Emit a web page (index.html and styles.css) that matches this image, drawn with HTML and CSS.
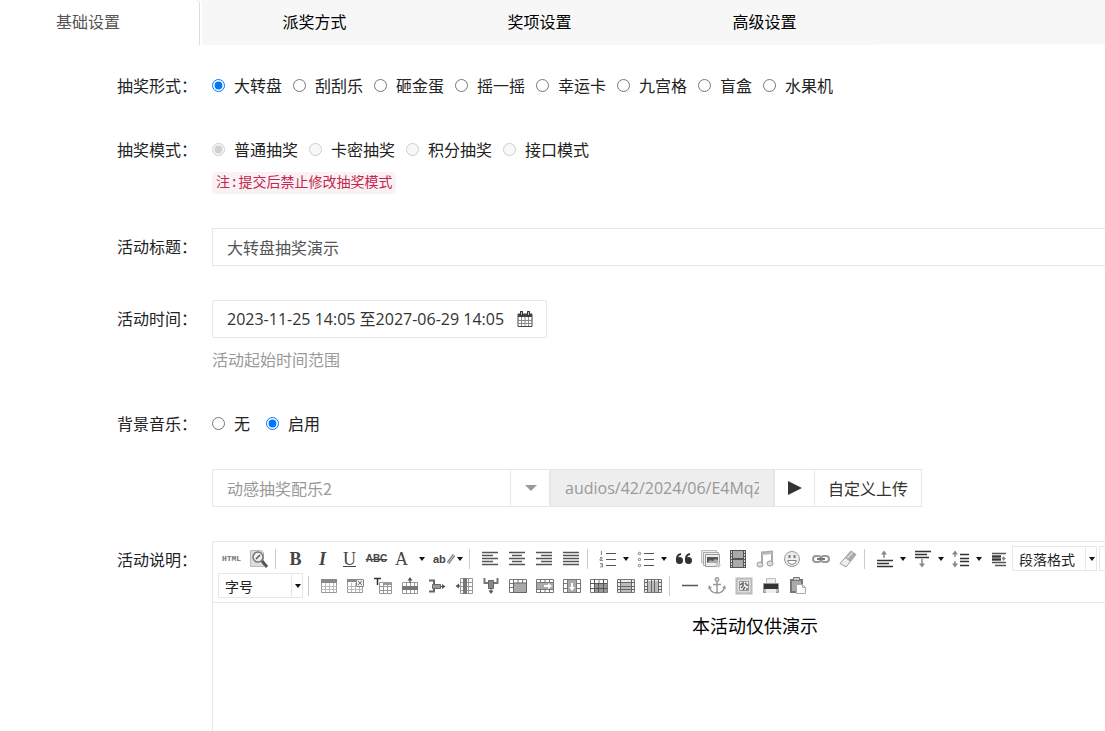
FILE: index.html
```html
<!DOCTYPE html>
<html lang="zh-CN">
<head>
  <meta charset="UTF-8">
  <title>活动设置</title>
  <link rel="stylesheet" href="styles.css">
</head>
<body>
<div class="page">
  <nav class="tabs">
    <a href="#base" class="tab active">基础设置</a>
    <a href="#send" class="tab">派奖方式</a>
    <a href="#prize" class="tab">奖项设置</a>
    <a href="#more" class="tab">高级设置</a>
  </nav>

  <form class="form">
    <div class="row">
      <div class="label" id="l-type">抽奖形式：</div>
      <div class="control">
        <div class="radios" role="radiogroup" aria-labelledby="l-type">
          <label><input type="radio" name="type" checked>大转盘</label>
          <label><input type="radio" name="type">刮刮乐</label>
          <label><input type="radio" name="type">砸金蛋</label>
          <label><input type="radio" name="type">摇一摇</label>
          <label><input type="radio" name="type">幸运卡</label>
          <label><input type="radio" name="type">九宫格</label>
          <label><input type="radio" name="type">盲盒</label>
          <label><input type="radio" name="type">水果机</label>
        </div>
      </div>
    </div>

    <div class="row">
      <div class="label" id="l-mode">抽奖模式：</div>
      <div class="control">
        <div class="radios" role="radiogroup" aria-labelledby="l-mode">
          <label><input type="radio" name="mode" checked disabled>普通抽奖</label>
          <label><input type="radio" name="mode" disabled>卡密抽奖</label>
          <label><input type="radio" name="mode" disabled>积分抽奖</label>
          <label><input type="radio" name="mode" disabled>接口模式</label>
        </div>
        <code class="note">注:提交后禁止修改抽奖模式</code>
      </div>
    </div>

    <div class="row">
      <label class="label tall" for="title">活动标题：</label>
      <div class="control">
        <input class="text" type="text" id="title" value="大转盘抽奖演示">
      </div>
    </div>

    <div class="row">
      <label class="label tall" for="time">活动时间：</label>
      <div class="control">
        <button type="button" class="date" id="time">
          <span>2023-11-25 14:05 至2027-06-29 14:05</span>
          <svg width="16" height="16" viewBox="0 0 16 16"><path d="M1 3h14v12.500H1z" fill="#fff" stroke="#444"/><path d="M1 3h14v3H1z" fill="#444"/><path d="M1 9.500h14M1 12.500h14M4.500 6v9M8 6v9M11.500 6v9" stroke="#888" fill="none"/><path d="M4.500 1v3M11.500 1v3" stroke="#333" stroke-width="3" stroke-linecap="round"/><path d="M4.500 1v3M11.500 1v3" stroke="#bbb"/></svg>
        </button>
        <p class="help">活动起始时间范围</p>
      </div>
    </div>

    <div class="row">
      <div class="label" id="l-music">背景音乐：</div>
      <div class="control">
        <div class="radios wide" role="radiogroup" aria-labelledby="l-music">
          <label><input type="radio" name="music">无</label>
          <label><input type="radio" name="music" checked>启用</label>
        </div>
        <div class="group">
          <div class="select">
            <select aria-label="音乐"><option>动感抽奖配乐2</option></select>
            <span class="caret"></span>
          </div>
          <input class="path" type="text" aria-label="音乐地址" value="audios/42/2024/06/E4MqZ8.mp3" readonly>
          <button type="button" class="play" aria-label="播放"><svg width="14" height="14" viewBox="0 0 14 14"><path d="M0 0l14 7-14 7z" fill="#333"/></svg></button>
          <button type="button" class="upload">自定义上传</button>
        </div>
      </div>
    </div>

    <div class="row">
      <div class="label tall" id="l-desc">活动说明：</div>
      <div class="control">
        <div class="editor">
          <div class="toolbar">
            <div class="line">
              <button type="button" class="t-html">HTML</button>
              <button type="button" aria-label="预览"><svg width="20" height="20" viewBox="0 0 20 20"><path d="M1.500 1.500h11l2 2v14h-13z" fill="#ddd" stroke="#bbb"/><circle cx="9" cy="8" r="5" fill="#eee" stroke="#777" stroke-width="1.500"/><path d="M7 10l4-4" stroke="#555" stroke-width="1.500"/><path d="M13 12l5 6" stroke="#555" stroke-width="3"/></svg></button>
              <i class="sep"></i>
              <button type="button" class="serif bold">B</button>
              <button type="button" class="serif bold italic">I</button>
              <button type="button" class="serif under">U</button>
              <button type="button" class="t-strike">ABC</button>
              <button type="button" class="serif drop">A</button>
              <button type="button" class="drop t-mark" aria-label="背景色">ab<svg width="8" height="12" viewBox="0 0 8 12"><path d="M1 10l6-8" stroke="#777" stroke-width="3"/><path d="M1 10l6-8" stroke="#ddd"/></svg></button>
              <i class="sep"></i>
              <button type="button" aria-label="左对齐"><svg width="16" height="16" viewBox="0 0 16 16"><path d="M0 1.500h16M0 4.500h11M0 7.500h16M0 10.500h11M0 13.500h16" stroke="#555" stroke-width="1.400"/></svg></button>
              <button type="button" aria-label="居中"><svg width="16" height="16" viewBox="0 0 16 16"><path d="M0 1.500h16M3 4.500h10M0 7.500h16M3 10.500h10M0 13.500h16" stroke="#555" stroke-width="1.400"/></svg></button>
              <button type="button" aria-label="右对齐"><svg width="16" height="16" viewBox="0 0 16 16"><path d="M0 1.500h16M5 4.500h11M0 7.500h16M5 10.500h11M0 13.500h16" stroke="#555" stroke-width="1.400"/></svg></button>
              <button type="button" aria-label="两端对齐"><svg width="16" height="16" viewBox="0 0 16 16"><path d="M0 1.500h16M0 4.500h16M0 7.500h16M0 10.500h16M0 13.500h16" stroke="#555" stroke-width="1.400"/></svg></button>
              <i class="sep"></i>
              <button type="button" class="drop" aria-label="编号"><svg width="18" height="18" viewBox="0 0 18 18"><path d="M7 3.500h10M7 9.500h10M7 15.500h10" stroke="#555"/><path d="M2.500 1v4M1 7.500h2v1.500h-2v1.500h3M1 13.500h2.500v3.500h-2.500M1.500 15h2" stroke="#888" fill="none"/></svg></button>
              <button type="button" class="drop" aria-label="项目符号"><svg width="18" height="18" viewBox="0 0 18 18"><path d="M7 3.500h10M7 9.500h10M7 15.500h10" stroke="#555"/><g fill="none" stroke="#777"><circle cx="2.500" cy="3.500" r="1.200"/><circle cx="2.500" cy="9.500" r="1.200"/><circle cx="2.500" cy="15.500" r="1.200"/></g></svg></button>
              <button type="button" aria-label="引用"><svg width="18" height="12" viewBox="0 0 18 12"><g fill="#333"><circle cx="4.500" cy="7.500" r="3.500"/><circle cx="13.500" cy="7.500" r="3.500"/></g><path d="M2 8q-1-6 4-7M11 8q-1-6 4-7" stroke="#333" stroke-width="1.800" fill="none"/></svg></button>
              <button type="button" aria-label="图片"><svg width="20" height="20" viewBox="0 0 20 20"><path d="M.5 1.500h15v12H.5z" fill="#eee" stroke="#bbb"/><path d="M2.500 3.500h15v13h-15z" fill="#eee" stroke="#aaa"/><path d="M4.500 5.500h14v12h-14z" fill="#eee" stroke="#999"/><path d="M6 8h11v6H6z" fill="#555"/><path d="M6 14l3-3 3 1 2-2 3 1v3z" fill="#aaa"/><circle cx="17" cy="16" r="2.500" fill="#ccc"/></svg></button>
              <button type="button" aria-label="视频"><svg width="18" height="18" viewBox="0 0 18 18"><path d="M1 0h16v18H1z" fill="#555"/><path d="M4 1h10v7H4zM4 10h10v7H4z" fill="#aaa"/><path d="M2.500 1v16M15.500 1v16" stroke="#ddd" stroke-dasharray="2 1"/></svg></button>
              <button type="button" aria-label="音频"><svg width="18" height="18" viewBox="0 0 18 18"><path d="M6 14V2.500l10-1V13" stroke="#aaa" stroke-width="2" fill="none"/><path d="M6 4l10-1" stroke="#bbb" stroke-width="2"/><g fill="#ddd" stroke="#999"><ellipse cx="4" cy="14.500" rx="3" ry="2.500"/><ellipse cx="14" cy="13.500" rx="3" ry="2.500"/></g></svg></button>
              <button type="button" aria-label="表情"><svg width="18" height="18" viewBox="0 0 18 18"><circle cx="9" cy="9" r="7.500" fill="#eee" stroke="#999"/><path d="M6.500 5v3M11.500 5v3" stroke="#777" stroke-width="2"/><path d="M4.500 10.500h9q-1 4-4.500 4t-4.500-4z" fill="#fff" stroke="#888"/></svg></button>
              <button type="button" class="push" aria-label="链接"><svg width="18" height="10" viewBox="0 0 18 10"><g fill="none" stroke="#999" stroke-width="2"><rect x="1" y="2" width="8" height="6" rx="3"/><rect x="9" y="2" width="8" height="6" rx="3"/></g><path d="M5 5h8" stroke="#777" stroke-width="2"/></svg></button>
              <button type="button" aria-label="清除格式"><svg width="18" height="18" viewBox="0 0 18 18"><path d="M1 13.500L12 1l5 3.500L7 17z" fill="#eee" stroke="#999"/><path d="M6 8l5.500 4L17 4.500 12 1z" fill="#aaa"/><path d="M8.500 8l5-5.500" stroke="#ddd" stroke-width="1.500"/></svg></button>
              <i class="sep"></i>
              <button type="button" class="drop" aria-label="段前距"><svg width="18" height="18" viewBox="0 0 18 18"><path d="M1 10.500h16M1 13.500h12M1 16.500h16" stroke="#333" stroke-width="1.500"/><path d="M8 8V2" stroke="#888" stroke-width="1.500"/><path d="M5 4.500l3-4 3 4z" fill="#888"/></svg></button>
              <button type="button" class="drop" aria-label="段后距"><svg width="18" height="18" viewBox="0 0 18 18"><path d="M1 1.500h16M1 4.500h12M1 7.500h14" stroke="#333" stroke-width="1.500"/><path d="M8 9v6" stroke="#888" stroke-width="1.500"/><path d="M5 13.500l3 4 3-4z" fill="#888"/></svg></button>
              <button type="button" class="drop" aria-label="行距"><svg width="18" height="18" viewBox="0 0 18 18"><path d="M8 4.500h9M8 8.500h9M8 11.500h9M8 15.500h9" stroke="#333" stroke-width="1.300"/><path d="M3 2v14" stroke="#888" stroke-width="1.500" stroke-dasharray="5 4"/><path d="M0 4.500l3-4 3 4zM0 13.500l3 4 3-4z" fill="#888"/></svg></button>
              <button type="button" aria-label="缩进"><svg width="16" height="16" viewBox="0 0 16 16"><path d="M1 2.500h14M1 11.500h14M4 14.500h11" stroke="#555" stroke-width="1.500"/><path d="M1 4h9v6H1z" fill="#777"/><path d="M1 5.500h9M1 8.500h9" stroke="#333"/><path d="M11 7.500h2" stroke="#888" stroke-width="2"/><path d="M12 5l3 2.500-3 2.500z" fill="#888"/></svg></button>
              <div class="mini"><select aria-label="段落格式"><option>段落格式</option></select><span></span></div>
              <div class="mini"><select aria-label="字体"><option>字体</option></select><span></span></div>
            </div>
            <div class="line">
              <div class="mini"><select aria-label="字号"><option>字号</option></select><span></span></div>
              <i class="sep"></i>
              <button type="button" aria-label="插入表格"><svg width="16" height="16" viewBox="0 0 16 16"><path d="M.5 1.500h15v13H.5z" fill="#fff" stroke="#999"/><path d="M0 1h16v4H0z" fill="#888"/><path d="M0 8.500h16M0 11.500h16M4.500 5v9M8.500 5v9M12.500 5v9" stroke="#bbb"/></svg></button>
              <button type="button" aria-label="删除表格"><svg width="18" height="16" viewBox="0 0 18 16"><path d="M.5 1.500h15v13H.5z" fill="#fff" stroke="#999"/><path d="M0 1h10v3H0z" fill="#888"/><path d="M0 8.500h16M0 11.500h16M4.500 5v9M8.500 5v9M12.500 5v9" stroke="#bbb"/><path d="M9.500 1.500h7v7h-7z" fill="#eee" stroke="#888"/><path d="M11 3l4 4M15 3l-4 4" stroke="#777"/></svg></button>
              <button type="button" aria-label="表格标题"><svg width="18" height="18" viewBox="0 0 18 18"><path d="M0 1.500h7M3.500 1v7" stroke="#333" stroke-width="1.500"/><path d="M5.500 5.500h12v11h-12zM5 9.500h12M5 13.500h12M9.500 6v10M13.500 6v10" fill="none" stroke="#999"/><path d="M9 5h8v3H9z" fill="#999"/></svg></button>
              <button type="button" aria-label="上方插入行"><svg width="18" height="18" viewBox="0 0 18 18"><path d="M1.500 5.500h15v11h-15zM5.500 5v11M9.500 5v11M13.500 5v11" fill="none" stroke="#999"/><path d="M1 9h16v4H1z" fill="#777"/><path d="M9 6V2" stroke="#333"/><path d="M6.500 3.500L9 0l2.500 3.500z" fill="#555"/></svg></button>
              <button type="button" aria-label="合并右侧"><svg width="18" height="16" viewBox="0 0 18 16"><path d="M1 2.500h5v11H1" fill="none" stroke="#666" stroke-width="2"/><path d="M4.500 6.500h8v4h-8z" fill="#999" stroke="#666"/><path d="M13 8.500h3" stroke="#555"/><path d="M14 6l3.500 2.500L14 11z" fill="#555"/></svg></button>
              <button type="button" aria-label="左侧插入列"><svg width="18" height="18" viewBox="0 0 18 18"><path d="M5.500 1.500h12v15h-12zM5 5.500h12M5 9.500h12M5 13.500h12M13.500 1v15" fill="none" stroke="#999"/><path d="M8 1h4v16H8z" fill="#777"/><path d="M5 9H2" stroke="#333"/><path d="M4 6.500L.5 9 4 11.500z" fill="#555"/></svg></button>
              <button type="button" aria-label="向下合并"><svg width="16" height="18" viewBox="0 0 16 18"><path d="M1.500 1v5H6M14.500 1v5H10" fill="none" stroke="#777" stroke-width="2"/><path d="M5.500 3.500h5v8h-5z" fill="#888" stroke="#666"/><path d="M8 11v3" stroke="#555"/><path d="M5.500 13.500h5L8 17z" fill="#555"/></svg></button>
              <button type="button" aria-label="合并单元格"><svg width="18" height="16" viewBox="0 0 18 16"><path d="M.5 1.500h17v13H.5zM0 5.500h17M0 9.500h4M4.500 1v13M9 1v4M13.500 1v4" fill="#fff" stroke="#777"/><path d="M4.500 5h13v9.500h-13z" fill="#aaa" stroke="#666"/></svg></button>
              <button type="button" aria-label="右合并"><svg width="18" height="16" viewBox="0 0 18 16"><path d="M.5 1.500h17v13H.5zM4.500 1v13M9 1v13M13.500 1v13" fill="#fff" stroke="#777"/><path d="M.5 4.500h17v7H.5z" fill="#aaa" stroke="#777"/><path d="M8 8h5" stroke="#fff" stroke-width="2"/><path d="M12 5l4 3-4 3z" fill="#fff"/></svg></button>
              <button type="button" aria-label="下合并"><svg width="18" height="16" viewBox="0 0 18 16"><path d="M.5 1.500h17v13H.5zM0 5.500h17M0 10.500h17" fill="#fff" stroke="#777"/><path d="M4.500 1.500h9v13h-9z" fill="#aaa" stroke="#777"/><path d="M9 5v5" stroke="#fff" stroke-width="2"/><path d="M6 9l3 4 3-4z" fill="#fff"/></svg></button>
              <button type="button" aria-label="拆分单元格"><svg width="18" height="16" viewBox="0 0 18 16"><path d="M.5 1.500h17v13H.5zM9 1v4" fill="#fff" stroke="#777"/><path d="M4 5h13v9H4z" fill="#999"/><path d="M0 5.500h17M0 10.500h17M4.500 1v13M8.500 5v9M13.500 1v13" stroke="#555"/></svg></button>
              <button type="button" aria-label="拆分行"><svg width="18" height="16" viewBox="0 0 18 16"><path d="M.5 1.500h17v13H.5z" fill="#eee" stroke="#777"/><path d="M4 4h10v10H4z" fill="#bbb"/><path d="M0 4.500h18M0 8.500h18M0 11.500h18M3.500 1v13M14.500 1v13" stroke="#666"/></svg></button>
              <button type="button" aria-label="拆分列"><svg width="18" height="16" viewBox="0 0 18 16"><path d="M.5 1.500h17v13H.5z" fill="#eee" stroke="#777"/><path d="M4 3h10v11H4z" fill="#bbb"/><path d="M0 4.500h4M0 8.500h4M0 11.500h4M14 4.500h4M14 8.500h4M14 11.500h4M3.500 1v13M7.500 1v13M10.500 1v13M14.500 1v13" stroke="#666"/></svg></button>
              <i class="sep"></i>
              <button type="button" aria-label="分隔线"><svg width="16" height="16" viewBox="0 0 16 16"><path d="M0 7.500h16" stroke="#555" stroke-width="1.500"/></svg></button>
              <button type="button" aria-label="锚点"><svg width="18" height="18" viewBox="0 0 18 18"><g fill="none" stroke="#999" stroke-width="1.500"><circle cx="9" cy="2.500" r="1.700"/><path d="M9 4v12M5 7.500h8M1.500 10q1 6 7.500 6t7.500-6"/></g><path d="M0 12l1-4 3 3zM18 12l-1-4-3 3z" fill="#999"/></svg></button>
              <button type="button" aria-label="地图"><svg width="18" height="18" viewBox="0 0 18 18"><path d="M1.500 1.500h15v15h-15z" fill="#ddd" stroke="#bbb" stroke-width="2"/><path d="M4.500 4.500h9v9h-9z" fill="#eee" stroke="#999"/><path d="M5 8l3-2v3l-2 2M10 6l3 3M10 10l-2 3M12 11v2" stroke="#666" stroke-width="1.500" fill="none"/></svg></button>
              <button type="button" aria-label="打印"><svg width="18" height="18" viewBox="0 0 18 18"><path d="M4.500 1.500h9v5h-9z" fill="#eee" stroke="#bbb"/><path d="M1.500 6.500h15v9h-15z" fill="#bbb" stroke="#999"/><path d="M2 7h14v5H2z" fill="#333"/><path d="M4 12h10v4H4z" fill="#eee"/></svg></button>
              <button type="button" aria-label="粘贴"><svg width="18" height="18" viewBox="0 0 18 18"><path d="M1 2h13v14H1z" fill="#777"/><path d="M3 4h9v10H3z" fill="#aaa"/><path d="M4.500 .5h6v3h-6z" fill="#ccc" stroke="#777"/><path d="M7.500 7.500h6l3 3v6h-9z" fill="#fff" stroke="#aaa"/><path d="M13.500 7.500v3h3" fill="none" stroke="#aaa"/></svg></button>
            </div>
          </div>
          <div class="content" contenteditable="true" role="textbox" aria-labelledby="l-desc">本活动仅供演示</div>
        </div>
      </div>
    </div>
  </form>
</div>
</body>
</html>
```
FILE: styles.css
```css
* {
  box-sizing: border-box;
}
body {
  margin: 0;
  background: #fff;
  color: #222;
  font: 16px/24px "Noto Sans CJK SC", sans-serif;
}
.page {
  height: 100vh;
  overflow: hidden;
}
button, input, select {
  margin: 0;
  font: inherit;
  color: inherit;
  border: 1px solid #e7e7e7;
  border-radius: 0;
  background: #fff;
}
button {
  padding: 0;
  cursor: pointer;
}

/* tabs */
.tabs {
  display: flex;
  align-items: flex-start;
  height: 44px;
  background: #f7f7f7;
}
.tab {
  width: 225px;
  height: 45px;
  line-height: 43px;
  text-align: center;
  color: #000;
  text-decoration: none;
  background: #f7f7f7;
}
.tab.active {
  width: 200px;
  margin-right: 2px;
  padding-right: 23px;
  color: #555;
  background: #fff;
  border-right: 1px solid #ddd;
  border-top-right-radius: 4px;
  box-shadow: 2px 0 #fff;
}

/* form */
.form {
  min-width: 1298px;
  padding-top: 27px;
}
.row {
  display: flex;
  gap: 15px;
  margin-bottom: 34px;
}
.label {
  width: 197px;
  line-height: 28px;
  text-align: right;
}
.label.tall {
  line-height: 36px;
}
.control {
  flex: 1;
}
.radios {
  display: flex;
  gap: 11px;
  height: 30px;
  padding-bottom: 2px;
}
.radios.wide {
  gap: 16px;
}
.radios label {
  display: flex;
  align-items: center;
  gap: 9px;
}
.radios input {
  width: 13px;
  height: 13px;
}
.note {
  display: block;
  width: fit-content;
  margin-top: 7px;
  padding: 0 4px;
  font: 14px/22px "Liberation Mono", "Noto Sans CJK SC", monospace;
  color: #c7254e;
  background: #f9f2f4;
  border-radius: 4px;
}
.text {
  display: block;
  width: 100%;
  height: 38px;
  padding: 0 14px;
  color: #555;
}
.date {
  display: flex;
  align-items: center;
  justify-content: space-between;
  min-width: 335px;
  height: 38px;
  padding: 0 13px 0 14px;
  color: #333;
  font-family: "Open Sans", "Noto Sans CJK SC", sans-serif;
  border-radius: 2px;
}
.help {
  margin: 9px 0 0;
  height: 28px;
  color: #999;
}

/* background music */
.group {
  display: flex;
  height: 38px;
  margin-top: 30px;
}
.select {
  position: relative;
  width: 338px;
}
.select select {
  appearance: none;
  width: 100%;
  height: 100%;
  padding: 0 54px 0 14px;
  color: #999;
}
.caret {
  position: absolute;
  top: 0;
  right: 0;
  width: 40px;
  height: 100%;
  display: flex;
  align-items: center;
  justify-content: center;
  border-left: 1px solid #e7e7e7;
  pointer-events: none;
}
.caret::before {
  content: "";
  border: 6px solid transparent;
  border-top-color: #999;
  border-bottom: 0;
}
.path {
  width: 224px;
  padding: 0 14px;
  color: #999;
  background: #eee;
  font-family: "Open Sans", sans-serif;
}
.play {
  width: 40px;
  display: flex;
  align-items: center;
  justify-content: center;
  border-right: 0;
}
.upload {
  width: 108px;
  color: #333;
}

/* rich text editor */
.editor {
  border: 1px solid #e7e7e7;
}
.toolbar {
  padding: 3px 5px;
  border-bottom: 1px solid #e7e7e7;
}
.line {
  display: flex;
  align-items: center;
  height: 27px;
}
.line button {
  display: flex;
  align-items: center;
  justify-content: center;
  width: 27px;
  height: 27px;
  border: 0;
  background: none;
  color: #444;
}
.line button.drop {
  width: 38px;
  padding-left: 5px;
  justify-content: space-between;
}
.line button.push {
  width: 29px;
  padding-left: 2px;
}
.drop::after, .mini span::before {
  content: "";
  border: 3px solid transparent;
  border-top: 4px solid #111;
  border-bottom: 0;
}
.drop::after {
  margin-right: 3px;
}
.line .serif {
  font: 18px/24px "Liberation Serif", serif;
}
.line .bold {
  font-weight: bold;
}
.line .italic {
  font-style: italic;
}
.line .under {
  text-decoration: underline;
}
.line .t-html {
  font: bold 8px/12px "Liberation Mono", monospace;
  color: #777;
}
.line .t-strike {
  font: bold 10px/12px "Liberation Sans", sans-serif;
  text-decoration: line-through;
}
.line .t-mark {
  font: bold 11px/12px "Liberation Sans", sans-serif;
}
.sep {
  width: 10px;
  height: 20px;
  padding-left: 3px;
}
.sep::before {
  content: "";
  display: block;
  width: 1px;
  height: 100%;
  background: #ccc;
}
.mini {
  position: relative;
  width: 85px;
  height: 25px;
  margin-right: 2px;
}
.mini select {
  appearance: none;
  display: block;
  width: 100%;
  height: 100%;
  padding: 0 16px 2px 6px;
  font-size: 14px;
}
.mini span {
  position: absolute;
  top: 0;
  right: 0;
  width: 12px;
  height: 100%;
  display: flex;
  align-items: center;
  justify-content: center;
  border-left: 1px solid #e7e7e7;
  pointer-events: none;
}
.content {
  min-height: 300px;
  padding: 8px;
  font-size: 18px;
  line-height: 28px;
  text-align: center;
  color: #000;
}
```
